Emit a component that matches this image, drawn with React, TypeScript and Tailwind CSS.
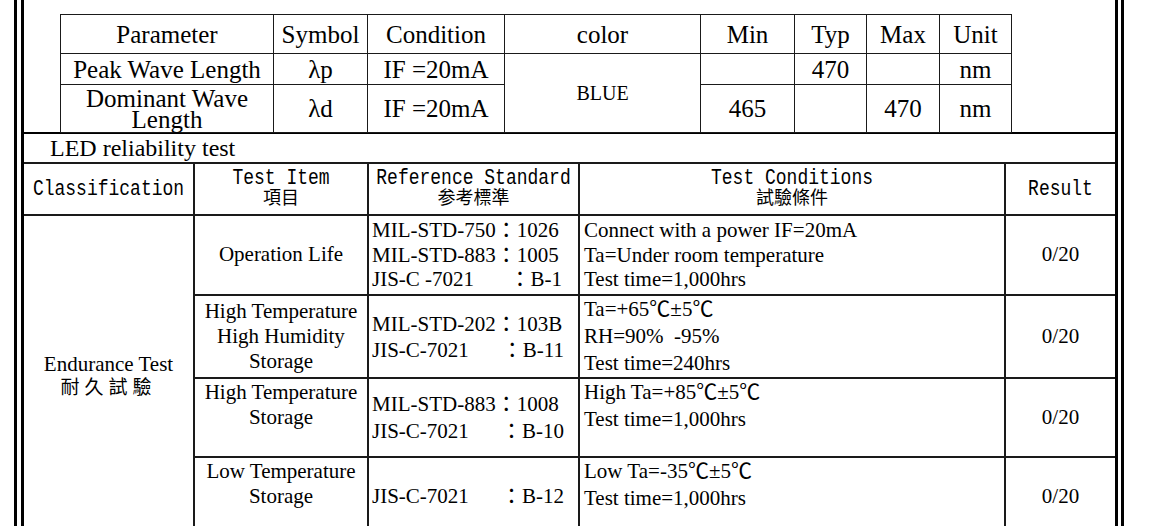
import React from 'react';

const serif = "[font-family:'Liberation_Serif','Noto_Sans_CJK_TC',serif]";
const mono = "[font-family:'Liberation_Mono','Noto_Sans_CJK_TC',monospace]";

// one line of a reference standard, code on the left, clause pushed right
function StdLine({ left, right }: { left: string; right: string }) {
  return (
    <div className="flex justify-between">
      <span>{left}</span>
      <span>{right}</span>
    </div>
  );
}

// header text is a tall, thin mono face in the scan
function Tall({ children }: { children: React.ReactNode }) {
  return <div className="scale-y-[1.2]">{children}</div>;
}

function TopTable() {
  const cell = 'border border-[#1a1a1a] text-center align-middle p-0';
  return (
    <table className={`border-collapse table-fixed w-[951px] text-[25px] leading-none text-black ${serif}`}>
      <colgroup>
        <col className="w-[213px]" />
        <col className="w-[94px]" />
        <col className="w-[137px]" />
        <col className="w-[196px]" />
        <col className="w-[94px]" />
        <col className="w-[72px]" />
        <col className="w-[73px]" />
        <col className="w-[72px]" />
      </colgroup>
      <tbody>
        <tr className="h-[39px]">
          <td className={cell}>Parameter</td>
          <td className={cell}>Symbol</td>
          <td className={cell}>Condition</td>
          <td className={cell}>color</td>
          <td className={cell}>Min</td>
          <td className={cell}>Typ</td>
          <td className={cell}>Max</td>
          <td className={cell}>Unit</td>
        </tr>
        <tr className="h-[31px]">
          <td className={cell}>Peak Wave Length</td>
          <td className={cell}>λp</td>
          <td className={cell}>IF =20mA</td>
          <td rowSpan={2} className={`${cell} text-[20px]`}>BLUE</td>
          <td className={cell}></td>
          <td className={cell}>470</td>
          <td className={cell}></td>
          <td className={cell}>nm</td>
        </tr>
        <tr className="h-[48px]">
          <td className={`${cell} leading-[21px]`}>
            Dominant Wave
            <br />
            Length
          </td>
          <td className={cell}>λd</td>
          <td className={cell}>IF =20mA</td>
          <td className={cell}>465</td>
          <td className={cell}></td>
          <td className={cell}>470</td>
          <td className={cell}>nm</td>
        </tr>
      </tbody>
    </table>
  );
}

function ReliabilityTable() {
  const td = 'border-r-2 border-b-2 border-[#1a1a1a] p-0';
  const last = 'border-b-2 border-[#1a1a1a] p-0';
  return (
    <table className={`border-collapse table-fixed w-full text-black text-[21px] ${serif}`}>
      <colgroup>
        <col className="w-[170px]" />
        <col className="w-[174px]" />
        <col className="w-[211px]" />
        <col className="w-[426px]" />
        <col />
      </colgroup>
      <tbody>
        {/* header */}
        <tr className={`h-[51px] text-[18px] leading-[21px] ${mono}`}>
          <td className={`${td} text-center align-middle`}>
            <Tall>Classification</Tall>
          </td>
          <td className={`${td} text-center align-middle`}>
            <Tall>Test Item</Tall>
            <div>項目</div>
          </td>
          <td className={`${td} text-center align-middle`}>
            <Tall>Reference Standard</Tall>
            <div>参考標準</div>
          </td>
          <td className={`${td} text-center align-middle`}>
            <Tall>Test Conditions</Tall>
            <div>試驗條件</div>
          </td>
          <td className={`${last} text-center align-middle`}>
            <Tall>Result</Tall>
          </td>
        </tr>

        {/* operation life */}
        <tr className="h-[80px]">
          <td rowSpan={4} className={`${td} text-center align-middle leading-[24px]`}>
            <div>Endurance Test</div>
            <div className="text-[19px] tracking-[5px]">耐久試驗</div>
          </td>
          <td className={`${td} text-center align-middle`}>Operation Life</td>
          <td className={`${td} align-middle pl-[3px] pr-[16px] leading-[24.5px]`}>
            <div>MIL-STD-750：1026</div>
            <div>MIL-STD-883：1005</div>
            <StdLine left="JIS-C -7021" right="：B-1" />
          </td>
          <td className={`${td} align-middle pl-[4px] leading-[24.5px]`}>
            <div>Connect with a power IF=20mA</div>
            <div>Ta=Under room temperature</div>
            <div>Test time=1,000hrs</div>
          </td>
          <td className={`${last} text-center align-middle`}>0/20</td>
        </tr>

        {/* high temp high humidity */}
        <tr className="h-[82px]">
          <td className={`${td} text-center align-middle leading-[25px]`}>
            <div>High Temperature</div>
            <div>High Humidity</div>
            <div>Storage</div>
          </td>
          <td className={`${td} align-middle pl-[3px] pr-[14px] leading-[26px]`}>
            <div>MIL-STD-202：103B</div>
            <StdLine left="JIS-C-7021" right="：B-11" />
          </td>
          <td className={`${td} align-middle pl-[4px] leading-[27px]`}>
            <div>Ta=+65℃±5℃</div>
            <div className="whitespace-pre">RH=90%  -95%</div>
            <div>Test time=240hrs</div>
          </td>
          <td className={`${last} text-center align-middle`}>0/20</td>
        </tr>

        {/* high temp storage */}
        <tr className="h-[79px]">
          <td className={`${td} text-center align-top pt-[1px] leading-[25px]`}>
            <div>High Temperature</div>
            <div>Storage</div>
          </td>
          <td className={`${td} align-middle pl-[3px] pr-[14px] leading-[27px]`}>
            <div>MIL-STD-883：1008</div>
            <StdLine left="JIS-C-7021" right="：B-10" />
          </td>
          <td className={`${td} align-top pl-[4px] leading-[27px]`}>
            <div>High Ta=+85℃±5℃</div>
            <div>Test time=1,000hrs</div>
          </td>
          <td className={`${last} text-center align-middle`}>0/20</td>
        </tr>

        {/* low temp storage */}
        <tr className="h-[79px]">
          <td className={`${td} text-center align-top pt-[1px] leading-[25px]`}>
            <div>Low Temperature</div>
            <div>Storage</div>
          </td>
          <td className={`${td} align-middle pl-[3px] pr-[14px] leading-[27px]`}>
            <StdLine left="JIS-C-7021" right="：B-12" />
          </td>
          <td className={`${td} align-top pl-[4px] leading-[27px]`}>
            <div>Low Ta=-35℃±5℃</div>
            <div>Test time=1,000hrs</div>
          </td>
          <td className={`${last} text-center align-middle`}>0/20</td>
        </tr>
      </tbody>
    </table>
  );
}

export default function App() {
  return (
    <div className="w-[1150px] h-[526px] overflow-hidden bg-white">
      {/* double frame */}
      <div className="ml-[14px] w-[1110px] h-full border-x-[3px] border-black pl-[4px] pr-[3px]">
        <div className="h-full border-x-[3px] border-black">
          <div className="h-[134px] border-b-2 border-black pl-[36px] pt-[14px]">
            <TopTable />
          </div>
          <div className={`h-[30px] border-b-2 border-[#1a1a1a] pl-[26px] text-[24px] leading-[28px] text-black ${serif}`}>
            LED reliability test
          </div>
          <ReliabilityTable />
        </div>
      </div>
    </div>
  );
}
